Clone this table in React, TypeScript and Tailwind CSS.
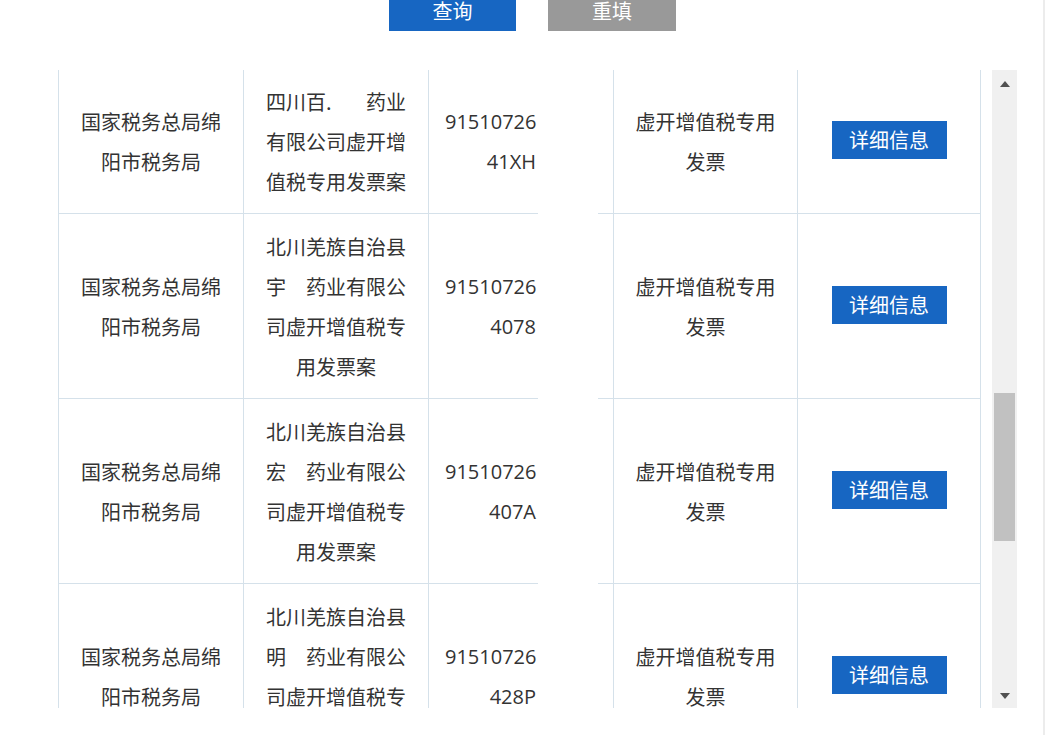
import type { ReactNode } from "react";

interface CaseRow {
  org: string;
  name: ReactNode;
  idHead: string;
  idTail: string;
  kind: string;
}

const hide = (s: string) => <span className="text-transparent">{s}</span>;

const rows: CaseRow[] = [
  {
    org: "国家税务总局绵阳市税务局",
    name: (
      <>
        四川百
        <span className="inline-block w-[20px] text-left">.</span>
        {hide("某")}药业有限公司虚开增值税专用发票案
      </>
    ),
    idHead: "91510726",
    idTail: "41XH",
    kind: "虚开增值税专用发票",
  },
  {
    org: "国家税务总局绵阳市税务局",
    name: (
      <>
        北川羌族自治县宇{hide("某")}药业有限公司虚开增值税专用发票案
      </>
    ),
    idHead: "91510726",
    idTail: "4078",
    kind: "虚开增值税专用发票",
  },
  {
    org: "国家税务总局绵阳市税务局",
    name: (
      <>
        北川羌族自治县宏{hide("某")}药业有限公司虚开增值税专用发票案
      </>
    ),
    idHead: "91510726",
    idTail: "407A",
    kind: "虚开增值税专用发票",
  },
  {
    org: "国家税务总局绵阳市税务局",
    name: (
      <>
        北川羌族自治县明{hide("某")}药业有限公司虚开增值税专用发票案
      </>
    ),
    idHead: "91510726",
    idTail: "428P",
    kind: "虚开增值税专用发票",
  },
];

const cell =
  "flex items-center justify-center text-center border-l border-b border-[#d5e1ea] px-[16px] pt-[13px] pb-[11px]";

export default function App() {
  return (
    <main
      className="w-[1045px] h-[735px] overflow-hidden bg-white border-r-2 border-[#ececec] text-[#333] text-[20px] leading-[40px]"
      style={{ fontFamily: '"Noto Sans CJK SC", "Noto Sans", sans-serif' }}
    >
      {/* 查询 / 重填 */}
      <div className="flex gap-[32px] pl-[389px] mt-[-9px]">
        <button className="w-[127px] h-[40px] bg-[#1766c2] text-white">查询</button>
        <button className="w-[128px] h-[40px] bg-[#999999] text-white">重填</button>
      </div>

      <div className="flex mt-[39px]">
        {/* 案件列表 */}
        <div className="relative ml-[58px] w-[923px] h-[638px] overflow-hidden">
          <div className="grid grid-cols-[185px_185px_185px_184px_184px] -mt-[1px]">
            {rows.map((r, i) => (
              <div key={i} className="contents">
                <div className={cell}>{r.org}</div>
                <div className={cell}>
                  <div>{r.name}</div>
                </div>
                <div className={cell + " !px-0"}>
                  <div className="w-full" style={{ fontFamily: '"Open Sans", sans-serif' }}>
                    <div className="text-left pl-[16px]">{r.idHead}</div>
                    <div className="text-right pr-[77px]">{r.idTail}</div>
                  </div>
                </div>
                <div className={cell}>{r.kind}</div>
                <div className={cell + " border-r"}>
                  <button className="w-[115px] h-[38px] mb-[4px] bg-[#1766c2] text-white leading-[38px]">
                    详细信息
                  </button>
                </div>
              </div>
            ))}
          </div>
          {/* 遮挡 */}
          <div className="absolute top-0 bottom-0 left-[480px] w-[60px] bg-white" />
        </div>

        {/* 滚动条 */}
        <div className="ml-[11px] w-[25px] h-[638px] bg-[#f0f0f0] flex flex-col">
          <div className="h-[28px] flex items-center justify-center">
            <svg width="10" height="6" viewBox="0 0 10 6">
              <path d="M0 6 L5 0 L10 6 Z" fill="#505050" />
            </svg>
          </div>
          <div className="mt-[295px] mx-[2px] h-[148px] bg-[#c1c1c1]" />
          <div className="mt-auto h-[24px] flex items-center justify-center">
            <svg width="10" height="6" viewBox="0 0 10 6">
              <path d="M0 0 L10 0 L5 6 Z" fill="#505050" />
            </svg>
          </div>
        </div>
      </div>
    </main>
  );
}
